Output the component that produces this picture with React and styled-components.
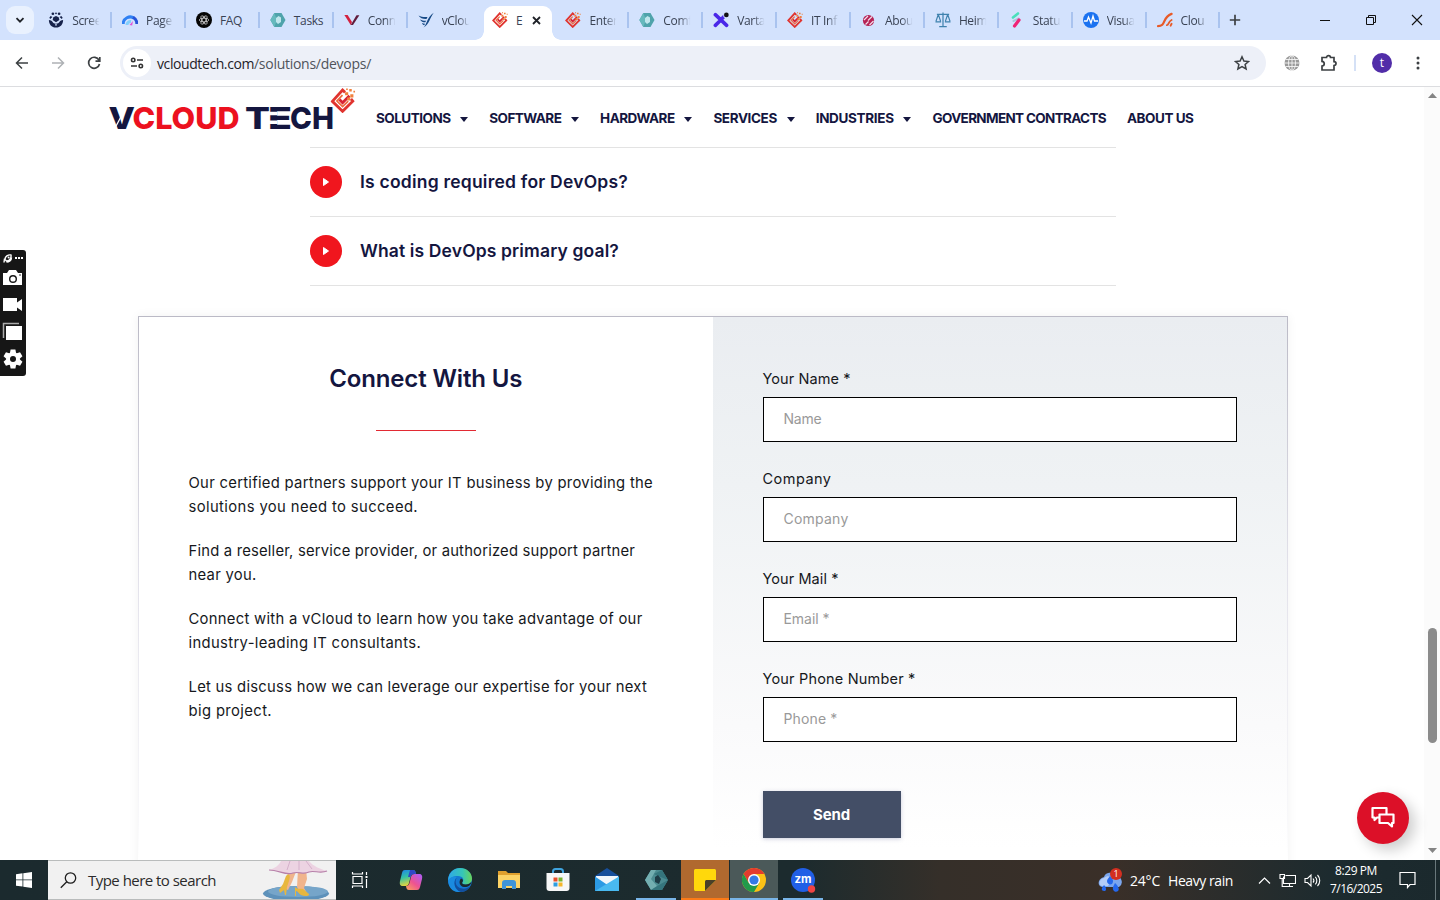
import React, { useLayoutEffect, useRef, useState } from "react";
import styled, { createGlobalStyle, css } from "styled-components";

const GlobalStyle = createGlobalStyle`
  * {
    box-sizing: border-box;
  }
  body {
    margin: 0;
    background: #fff;
    overflow: hidden;
  }
  svg {
    display: block;
    flex: none;
  }
`;

const ui = `"Open Sans", "Noto Sans", sans-serif`;
const brand = `Inter, "Liberation Sans", sans-serif`;
const navy = "#14163f";

const Screen = styled.div`
  width: 1440px;
  height: 900px;
  display: flex;
  flex-direction: column;
  position: relative;
  overflow: hidden;
  font-family: ${brand};
`;

const FitText = styled.span`
  display: inline-block;
  white-space: pre;
`;

// Tracks the text out (or in) until it fills the given width.
const Fit = ({ w, children }) => {
  const ref = useRef(null);
  const [spacing, setSpacing] = useState(0);

  useLayoutEffect(() => {
    const natural = ref.current.getBoundingClientRect().width;
    setSpacing((w - natural) / children.length);
  }, [w, children]);

  return (
    <FitText ref={ref} style={{ letterSpacing: spacing }}>
      {children}
    </FitText>
  );
};

/* ---------- browser ---------- */

const TabStrip = styled.div`
  height: 40px;
  flex: none;
  display: flex;
  background: #d3e2fd;
  font-family: ${ui};
`;

const TabSearch = styled.div`
  width: 28px;
  height: 28px;
  margin: 6px 4.2px 0 6px;
  border-radius: 9px;
  background: #e9f1fe;
  display: flex;
  align-items: center;
  justify-content: center;
`;

const Tab = styled.div`
  width: 73.9px;
  height: 40px;
  flex: none;
  display: flex;
  align-items: center;
  padding-left: 10px;
  gap: 8px;
  font-size: 12px;
  color: #3a4354;

  ${(p) =>
    p.$active &&
    css`
      width: 68px;
      height: 34px;
      margin: 6px 3.5px 0 2.4px;
      padding: 0 0 6px 8px;
      background: #fff;
      border-radius: 9px 9px 0 0;
      position: relative;

      &::before,
      &::after {
        content: "";
        position: absolute;
        bottom: 0;
        width: 9px;
        height: 9px;
        background: radial-gradient(circle at 0 0, transparent 8.5px, #fff 9px);
      }
      &::before {
        left: -9px;
      }
      &::after {
        right: -9px;
        transform: scaleX(-1);
      }
    `}
`;

const TabLabel = styled.span`
  width: ${(p) => (p.$short ? 8 : 30)}px;
  margin-top: 1px;
  white-space: nowrap;
  letter-spacing: -0.35px;
  line-height: 18px;
  mask-image: ${(p) =>
    p.$fade ? "linear-gradient(90deg, #000 55%, transparent 92%)" : "none"};
`;

const Separator = styled.i`
  width: 2px;
  height: 16px;
  margin-left: auto;
  background: #a9c3ef;
  visibility: ${(p) => (p.$hidden ? "hidden" : "visible")};
`;

const NewTab = styled.div`
  width: 30px;
  display: flex;
  align-items: center;
  justify-content: center;
`;

const WindowButtons = styled.div`
  display: flex;
  align-items: center;
  gap: 34px;
  margin-left: auto;
  padding-right: 17px;
`;

const Toolbar = styled.div`
  height: 47px;
  flex: none;
  display: flex;
  align-items: center;
  padding-left: 14px;
  background: #fff;
  border-bottom: 1px solid #dcdde0;
`;

const ToolbarNav = styled.div`
  display: flex;
  gap: 20px;
  width: 106px;
`;

const AddressBar = styled.div`
  width: 1146px;
  height: 34px;
  display: flex;
  align-items: center;
  padding: 0 16px 0 3px;
  border-radius: 17px;
  background: #edf0f8;
  font-family: ${ui};
  font-size: 14px;
  color: #50545b;

  > svg {
    margin-left: auto;
  }
`;

const Domain = styled.span`
  color: #1f2228;
`;

const SiteInfo = styled.div`
  width: 28px;
  height: 28px;
  margin-right: 6px;
  border-radius: 50%;
  background: #fff;
  display: flex;
  align-items: center;
  justify-content: center;
`;

const Extensions = styled.div`
  display: flex;
  align-items: center;
  padding-left: 18px;
`;

const Divider = styled.i`
  width: 2px;
  height: 16px;
  margin: 0 16px;
  background: #d5e1f6;
`;

const Avatar = styled.div`
  width: 20px;
  height: 20px;
  margin-right: 16px;
  border-radius: 50%;
  background: #512da8;
  color: #fff;
  font: 12px/19px ${ui};
  text-align: center;
`;

/* ---------- site ---------- */

const Viewport = styled.div`
  height: 773px;
  flex: none;
  display: flex;
  overflow: hidden;
`;

const Page = styled.div`
  flex: 1;
  display: flex;
  flex-direction: column;
  overflow: hidden;
`;

const Header = styled.header`
  height: 60px;
  flex: none;
  display: flex;
  padding-left: 109px;
`;

const Nav = styled.nav`
  display: flex;
  align-items: center;
  gap: 21px;
  height: 62px;
  margin-left: 19px;
  font-size: 13.5px;
  font-weight: 700;
  color: ${navy};
`;

const NavItem = styled.div`
  display: flex;
  align-items: center;
  gap: 9.8px;
`;

const Caret = styled.i`
  border: 4.5px solid transparent;
  border-top: 5px solid ${navy};
  border-bottom: 0;
  margin-top: 2px;
`;

const Faq = styled.div`
  width: 806px;
  flex: none;
  margin-left: 310px;
  border-top: 1px solid #e3e3e3;
`;

const Question = styled.div`
  height: 69px;
  display: flex;
  align-items: center;
  gap: 18px;
  border-bottom: 1px solid #e3e3e3;
  font-size: 17.5px;
  line-height: 20px;
  font-weight: 600;
  color: ${navy};
`;

const PlayDot = styled.div`
  width: 32px;
  height: 32px;
  border-radius: 50%;
  background: #f0161e;
  display: flex;
  align-items: center;
  justify-content: center;
`;

const Card = styled.section`
  width: 1150px;
  height: 560px;
  flex: none;
  display: flex;
  margin: 30px 0 0 138px;
  padding: 1px 1px 0;
  background: linear-gradient(#bbbac6, #e2e1ea 45%, #f8f8fa 90%, #fff 97%);
  box-shadow: 0 0 10px rgba(0, 0, 0, 0.06);
`;

const Intro = styled.div`
  width: 574px;
  display: flex;
  flex-direction: column;
  padding: 44px 49px 0 49.5px;
  background: #fff;
`;

const Title = styled.h2`
  margin: 0 1px 0 0;
  text-align: center;
  font-size: 24px;
  line-height: 36px;
  font-weight: 600;
  color: ${navy};
`;

const Rule = styled.i`
  width: 100px;
  height: 1px;
  margin: 33px 0 40px 187.5px;
  background: #e22a33;
`;

const Paragraph = styled.p`
  display: flex;
  flex-direction: column;
  align-items: flex-start;
  margin: 0 0 20px;
  font-size: 14.8px;
  line-height: 24px;
  color: #16181c;
`;

const Form = styled.div`
  flex: 1;
  padding: 50px 50px 0;
  background: linear-gradient(#eaedf1, #eff2f4 30%, #fafafb 73%, #fff 95%);
`;

const Field = styled.label`
  display: flex;
  flex-direction: column;
  align-items: flex-start;
  height: 100px;
  font-size: 14.5px;
  line-height: 24px;
  color: #16181c;

  > span {
    margin-left: -0.5px;
  }
`;

const FieldBox = styled.div`
  width: 474px;
  height: 45px;
  margin-top: 6px;
  padding-left: 19.5px;
  border: 1px solid #000;
  background: #fff;
  font-size: 14px;
  line-height: 42px;
  color: #999;
`;

const SendButton = styled.button`
  display: block;
  width: 138px;
  height: 47px;
  margin-top: 24px;
  padding: 0 1px 0 0;
  border: 0;
  background: #434e66;
  box-shadow: 0 1px 4px rgba(50, 60, 120, 0.25);
  color: #fff;
  font: 700 15px ${brand};
`;

const Scrollbar = styled.div`
  width: 16px;
  display: flex;
  flex-direction: column;
  align-items: center;
  justify-content: space-between;
  padding: 6px 0 7px 1px;
  background: #fbfbfb;
`;

const Thumb = styled.i`
  width: 9px;
  height: 115px;
  margin-top: 424px;
  border-radius: 5px;
  background: #8b8b8b;
`;

const ChatBubble = styled.div`
  position: absolute;
  left: 1357px;
  top: 792px;
  width: 52px;
  height: 52px;
  border-radius: 50%;
  background: #dc1028;
  box-shadow: 6px 6px 14px rgba(0, 0, 0, 0.2);
  display: flex;
  align-items: center;
  justify-content: center;
`;

const CaptureBar = styled.div`
  position: absolute;
  left: 0;
  top: 250px;
  width: 26px;
  height: 126px;
  border-radius: 0 3px 3px 0;
  background: #161616;
`;

/* ---------- taskbar ---------- */

const Taskbar = styled.div`
  height: 40px;
  flex: none;
  display: flex;
  align-items: stretch;
  background: linear-gradient(
    90deg,
    #1b2a2e 0,
    #1c2b2e 800px,
    #352f29 940px,
    #3a2f28 1110px,
    #1d2b2f 1330px,
    #1b292d
  );
  color: #fff;
  font-family: ${ui};
  position: relative;
  z-index: 1;
`;

const Start = styled.div`
  width: 48px;
  display: flex;
  align-items: center;
  justify-content: center;
`;

const SearchBox = styled.div`
  width: 288px;
  display: flex;
  align-items: center;
  padding-left: 12px;
  background: #f1f1f1;
  border: solid #b9bcbc;
  border-width: 1px 0;
  color: #2b2b2b;
  font-size: 15px;

  > span {
    margin-left: 11px;
    flex: 1;
  }
`;

const Apps = styled.div`
  display: flex;
  padding-left: 3px;
`;

const AppButton = styled.div`
  width: 48px;
  margin-right: 1px;
  display: flex;
  align-items: center;
  justify-content: center;
  background: ${(p) => p.$fill || "transparent"};
  box-shadow: ${(p) => (p.$line ? `inset 0 -2px ${p.$line}` : "none")};
  ${(p) => p.$narrow && "width: 40px; margin: 0 5px 0 4px;"}
`;

const TaskView = styled.div`
  width: 48px;
  display: flex;
  align-items: center;
  justify-content: center;
`;

const Tray = styled.div`
  display: flex;
  align-items: center;
  margin-left: auto;
  font-size: 14px;
`;

const Weather = styled.div`
  display: flex;
  align-items: center;
  width: 160px;

  > span + span {
    margin-left: 8px;
  }
  > svg {
    margin-right: 7px;
  }
`;

const TrayIcons = styled.div`
  display: flex;
  align-items: center;
  gap: 8px;
  width: 72px;
`;

const Clock = styled.div`
  width: 52px;
  display: flex;
  flex-direction: column;
  align-items: center;
  font-size: 12px;
  line-height: 18px;
`;

const ShowDesktop = styled.i`
  width: 5px;
  align-self: stretch;
  margin-left: 19px;
  border-left: 1px solid #69777b;
`;

/* ---------- drawings ---------- */

const Line = ({ size = 16, box = 16, w = 1.5, color = "#3c4043", children }) => (
  <svg
    width={size}
    height={size}
    viewBox={`0 0 ${box} ${box}`}
    fill="none"
    stroke={color}
    strokeWidth={w}
  >
    {children}
  </svg>
);

const Diamond = ({ size = 16 }) => (
  <svg width={size} height={size} viewBox="0 0 24 24" fill="none">
    <path
      d="M14 4.2 11.6 2 1.8 12.8l9.8 9.6 9.8-9.8-1.8-2.2"
      stroke="#e0342f"
      strokeWidth="2.7"
    />
    <path d="M11.5 6.8 6.2 12.5l5.4 5.3 5.4-5.2" stroke="#ee6a3c" strokeWidth="1.7" />
    <path d="m8.6 11 3 3.2 6.6-6.8" stroke="#d92532" strokeWidth="2.7" />
    <path
      d="M14 4h3v3h-3zM18 1h2.4v2.4H18zM19 6h3v3h-3zM22 2.6h1.6v1.6H22zM15 .4h1.6V2H15zM16 9h3v3h-3z"
      fill="#f0803c"
    />
  </svg>
);

const Hexagon = () => (
  <svg width="16" height="16" viewBox="0 0 16 16">
    <path d="M4.3 1h7.2l4 7-4 7H4.3L.4 8z" fill="#4fa3ab" />
    <path d="M4.3 1 .4 8l3.9 7L7 8z" fill="#66b9bd" />
    <path d="M8.5 4 11 5.5V10l-3 2-2-2V6z" fill="#bfe6ec" />
  </svg>
);

const favicons = {
  soccer: (
    <svg width="16" height="16" viewBox="0 0 18 18">
      <path d="M1 9c2 0 3 1 4 2 1 3 7 3 8 0 1-1 2-2 4-2 0 5-3 8.5-8 8.5S1 14 1 9z" fill="#17234b" />
      <path d="m6 6 3-1.5L12 6l.8 3L9 11.5 5.2 9z" fill="#17234b" />
      <path d="m1.5 6.5 1.5-2 2 1-2.5 2.3zM16.5 6.5l-1.5-2-2 1 2.5 2.3z" fill="#17234b" />
      <path d="M8 14.5h2" stroke="#d3e2fd" strokeWidth="1.5" />
      <circle cx="5.5" cy="2" r="1.5" fill="#17234b" />
      <circle cx="12.5" cy="2" r="1.5" fill="#17234b" />
      <circle cx="9" cy="1.5" r="1" fill="#17234b" />
    </svg>
  ),
  gauge: (
    <svg width="16" height="16" viewBox="0 0 16 16" fill="none">
      <path d="M1.2 12a7 7 0 0 1 11-5.8" stroke="#2f80f3" strokeWidth="3" />
      <path d="M11 5.3a7 7 0 0 1 3.8 6.7" stroke="#2753d8" strokeWidth="3" />
      <path d="M5 13a3.5 3.5 0 0 1 4-3.5" stroke="#83cffc" strokeWidth="3" />
      <path d="M7.5 13 11 9l-.8 4.6z" fill="#e055d8" />
    </svg>
  ),
  gpt: (
    <svg width="16" height="16" viewBox="0 0 16 16" fill="none" stroke="#ccc" strokeWidth=".8">
      <circle cx="8" cy="8" r="8" fill="#050505" stroke="none" />
      <ellipse cx="8" cy="8" rx="4.8" ry="1.9" />
      <ellipse cx="8" cy="8" rx="4.8" ry="1.9" transform="rotate(60 8 8)" />
      <ellipse cx="8" cy="8" rx="4.8" ry="1.9" transform="rotate(120 8 8)" />
    </svg>
  ),
  hex: <Hexagon />,
  vee: (
    <svg width="16" height="16" viewBox="0 0 16 16">
      <path d="M.4 3h3.2L8 10 6.7 13z" fill="#d3203f" />
      <path d="M6.7 13 12.5 3.2h2.9L9 13z" fill="#611c3c" />
    </svg>
  ),
  wing: (
    <svg width="16" height="16" viewBox="0 0 16 16" fill="#174a86">
      <path d="M.5 3.5c3 1.500 5.500 1.800 9 1.500L8.500 7C5 7.200 2 6 .5 3.500zM2 7.500c2 1 4 1.300 6.200 1.200l-1 1.600C5 10.300 3 9.500 2 7.500zM4 11c1 .6 1.800.8 3 .8l-.7 1.500C5 13 4.500 12.500 4 11z" />
      <path d="M5.500 15.500C9 12.500 9 5 15.700.8 12 5.500 11 13 5.500 15.500z" />
    </svg>
  ),
  diamond: <Diamond />,
  cross: (
    <svg width="16" height="16" viewBox="0 0 17 16">
      <path d="m2.5 2.3 12 11.4M2.5 13.7 6.7 9.6M8 8l4-4" stroke="#4a27e8" strokeWidth="3.8" strokeLinecap="round" />
      <circle cx="14.2" cy="2.6" r="3.4" fill="#d3e2fd" />
      <circle cx="14.2" cy="2.6" r="2.5" fill="#111" />
    </svg>
  ),
  ball: (
    <svg width="16" height="16" viewBox="0 0 16 16">
      <circle cx="7.5" cy="8.5" r="5.6" fill="#b52255" />
      <path d="M3 8 7 4M7 8.500l4-4M4.500 12.500l3-3M8.500 13l4-4" stroke="#f3dbe8" strokeWidth="1.2" />
    </svg>
  ),
  scale: (
    <svg width="16" height="16" viewBox="0 0 17 16" fill="none" stroke="#3f82ae" strokeWidth="1.3">
      <path d="M8.5 0v14.5M2 2h13M3.5 2 1 9.5M3.5 2 6 9.5M13.5 2 11 9.5M13.5 2l2.5 7.5M.5 10h6M10.5 10h6M4.5 15h8" />
    </svg>
  ),
  spark: (
    <svg width="16" height="16" viewBox="0 0 16 16" fill="none" strokeLinecap="round">
      <path d="m4 5.5 5-4" stroke="#4ae0bb" strokeWidth="2.6" />
      <path d="M4.5 9 9.5 6.5" stroke="#a9c6dc" strokeWidth="2" />
      <path d="M10 8 5.5 14" stroke="#f02376" strokeWidth="3.2" />
    </svg>
  ),
  pulse: (
    <svg width="16" height="16" viewBox="0 0 16 16">
      <circle cx="8" cy="8" r="8" fill="#1b72f0" />
      <path d="M1 9h3l1.5-4L8 11l2-7 1.5 5H15" stroke="#fff" strokeWidth="1.3" fill="none" />
    </svg>
  ),
  swoosh: (
    <svg width="16" height="16" viewBox="0 0 17 16" fill="none" stroke="#e75a28" strokeLinecap="round">
      <path d="M1 14.5c9 0 4-9 14.5-13" strokeWidth="2.4" />
      <path d="M10.500 13.500c2 0 1.500-4 5-5.500M14.500 14l1-2" strokeWidth="2" />
    </svg>
  ),
};

const tabs = [
  { icon: "soccer", label: "Scree", fade: true },
  { icon: "gauge", label: "Page", fade: true },
  { icon: "gpt", label: "FAQ" },
  { icon: "hex", label: "Tasks" },
  { icon: "vee", label: "Conn", fade: true },
  { icon: "wing", label: "vClou", fade: true },
  { icon: "diamond", label: "E", active: true },
  { icon: "diamond", label: "Enter", fade: true },
  { icon: "hex", label: "Comf", fade: true },
  { icon: "cross", label: "Varta", fade: true },
  { icon: "diamond", label: "IT Inf", fade: true },
  { icon: "ball", label: "Abou", fade: true },
  { icon: "scale", label: "Heim", fade: true },
  { icon: "spark", label: "Statu", fade: true },
  { icon: "pulse", label: "Visua", fade: true },
  { icon: "swoosh", label: "Clou", fade: true },
];

const navItems = [
  { label: "SOLUTIONS", w: 74.5, menu: true },
  { label: "SOFTWARE", w: 72, menu: true },
  { label: "HARDWARE", w: 74.5, menu: true },
  { label: "SERVICES", w: 63.5, menu: true },
  { label: "INDUSTRIES", w: 78, menu: true },
  { label: "GOVERNMENT CONTRACTS", w: 173.5 },
  { label: "ABOUT US", w: 66.5 },
];

const questions = [
  ["Is coding required for DevOps?", 268],
  ["What is DevOps primary goal?", 259],
];

const paragraphs = [
  [
    ["Our certified partners support your IT business by providing the", 464.5],
    ["solutions you need to succeed.", 229.5],
  ],
  [
    ["Find a reseller, service provider, or authorized support partner", 446.5],
    ["near you.", 68],
  ],
  [
    ["Connect with a vCloud to learn how you take advantage of our", 454],
    ["industry-leading IT consultants.", 232.5],
  ],
  [
    ["Let us discuss how we can leverage our expertise for your next", 458.5],
    ["big project.", 83.5],
  ],
];

const fields = [
  { label: "Your Name *", w: 88, hint: "Name", hintW: 38 },
  { label: "Company", w: 69, hint: "Company", hintW: 65 },
  { label: "Your Mail *", w: 76, hint: "Email *", hintW: 46 },
  { label: "Your Phone Number *", w: 153, hint: "Phone *", hintW: 54 },
];

const Logo = () => (
  <svg width="248" height="48" viewBox="109 87 248 48">
    <g fontFamily="Inter, sans-serif" fontWeight="800" fontSize="30.5" fill={navy}>
      <text x="108.5" y="129" textLength="26.5" lengthAdjust="spacingAndGlyphs">
        V
      </text>
      {/* cut across the left arm of the V */}
      <path d="m123.500 112-8.500 16" stroke="#fff" strokeWidth="1.3" />
      <text x="132.5" y="129" textLength="107" lengthAdjust="spacingAndGlyphs" fill="#ec111f">
        CLOUD
      </text>
      <text x="245" y="129" textLength="25" lengthAdjust="spacingAndGlyphs">
        T
      </text>
      <text x="268" y="129" textLength="24" lengthAdjust="spacingAndGlyphs">
        E
      </text>
      {/* the E has no stem */}
      <path d="M268 111.8h9.500v3.400H268zM268 120.400h9.500v3.700H268z" fill="#fff" />
      <text x="290" y="129" textLength="44" lengthAdjust="spacingAndGlyphs">
        CH
      </text>
    </g>
    <g transform="translate(330.5 88)">
      <Diamond size={25} />
    </g>
  </svg>
);

const Dancer = () => (
  <svg width="74" height="38" viewBox="0 0 74 38">
    <ellipse cx="34" cy="32.5" rx="33" ry="7.5" fill="#5d91ba" />
    <ellipse cx="36" cy="30.5" rx="30" ry="5.5" fill="#76a5c9" />
    <path d="M27 8h8l-5 13-4 8-3-1 1-9zM36 8h8l1 10-3 9 3 5-6 1-4-7z" fill="#f0b48c" />
    <path d="M24 15c3-3 5-1 3 5l-2 6-1 8h-1l-1-5-4 3-1-3 4-6zM33 26c3 3 6 1 8 2l6 5c1 2-4 3-8 1-2-1-3-4-5-4v5h-1z" fill="#e8b73e" />
    <path d="M19 0h28c4 5 11 8 18 10-7 3-13-1-18 1-6 3-10-1-16 1-7 3-14-3-24-3C14 7 17 4 19 0z" fill="#ecd3e2" />
    <path d="M7 9c10 0 17 6 24 3 6-2 10 2 16-1 5-2 11 2 18-1" stroke="#b780a9" strokeWidth="1.2" fill="none" />
    <path d="m28 0-3 9M37 0v9M44 0l6 8" stroke="#d5b0cb" fill="none" />
  </svg>
);

const Copilot = () => (
  <svg width="24" height="24" viewBox="0 0 24 24">
    <defs>
      <linearGradient id="cpA" x1="0" y1="0" x2="0.3" y2="1">
        <stop offset="0" stopColor="#1c82f0" />
        <stop offset=".5" stopColor="#35c3a4" />
        <stop offset="1" stopColor="#e8d33b" />
      </linearGradient>
      <linearGradient id="cpB" x1=".8" y1="0" x2="0" y2="1">
        <stop offset="0" stopColor="#b65bee" />
        <stop offset=".5" stopColor="#ee5390" />
        <stop offset="1" stopColor="#fba55b" />
      </linearGradient>
    </defs>
    <path d="M6 2h8c2 0 2.600 1.500 3 4h-2c-2 0-3 1-3.500 3L10 15c-.5 2-1.500 3-3.500 3H4c-3 0-3.600-2-3-5L3 5c.6-2 1-3 3-3z" fill="url(#cpA)" />
    <path d="M18 22h-8c-2 0-2.600-1.500-3-4 2 0 3-1 3.500-3L12 9c.5-2 1.500-3 3.500-3H20c3 0 3.600 2 3 5l-2 8c-.6 2-1 3-3 3z" fill="url(#cpB)" />
    <path d="M11 2h3c2 0 2.600 1.500 3 4h-2c-2 0-3 1-3.500 3H9z" fill="#2f47c8" />
  </svg>
);

const Edge = () => (
  <svg width="24" height="24" viewBox="0 0 24 24">
    <defs>
      <linearGradient id="edgeTop" x1="0" x2="1">
        <stop offset="0" stopColor="#2fa9e8" />
        <stop offset=".6" stopColor="#36c6b7" />
        <stop offset="1" stopColor="#69d45c" />
      </linearGradient>
    </defs>
    <circle cx="12" cy="12" r="12" fill="#1478d2" />
    <path d="M.2 11C1 4.500 6 0 12 0c7 0 12 5 12 10.500 0 4-3 6-6.500 6-3 0-4-1.500-3-2.500 2-2 .5-6-4.500-6C5.500 8 1.500 10 .2 13z" fill="url(#edgeTop)" />
    <path d="M9 9c-4 3-3 11 4 14.900C5 25 0 19 .2 12.500 2 9 6 7.500 9 9z" fill="#1a8be0" />
    <path d="M9 9.500c-3 4-1 10 5 11 3 .5 6-.5 8-2-2 4-6 5.500-9 5.400C6 22 4.500 13 9 9.500z" fill="#124f9e" />
    <path d="M14.500 14c-1 1 0 2.500 3 2.500 2.500 0 5-1.200 6-3-.5 4-4 6-7.500 5.500-4-.5-6-5-3-8.500 2 .5 2.500 2.500 1.500 3.500z" fill="#1b2a2e" />
  </svg>
);

const Explorer = () => (
  <svg width="22" height="20" viewBox="0 0 22 20">
    <path d="M0 1h8l2 2h12v5H0z" fill="#e0a02e" />
    <path d="M0 5h22v13H0z" fill="#fcd366" />
    <path d="M4 19v-6c0-2 1-3 3-3h8c2 0 3 1 3 3v6h-4v-3H8v3z" fill="#3f94d8" />
  </svg>
);

const Store = () => (
  <svg width="24" height="24" viewBox="0 0 24 24">
    <path d="M7 6V3.500C7 2 8 1 9.500 1h5C16 1 17 2 17 3.500V6" stroke="#3fa4df" strokeWidth="2" fill="none" />
    <path d="M.5 5h23v15c0 2-1 3-3 3h-17c-2 0-3-1-3-3z" fill="#f7f7f7" />
    <path d="M7.500 9.500h4v4h-4z" fill="#e8502b" />
    <path d="M12.500 9.500h4v4h-4z" fill="#7bb32e" />
    <path d="M7.500 14.500h4v4h-4z" fill="#2d9de0" />
    <path d="M12.500 14.500h4v4h-4z" fill="#f5b62a" />
  </svg>
);

const Mail = () => (
  <svg width="24" height="24" viewBox="0 0 24 24">
    <path d="M0 8 12 0l12 8v8H0z" fill="#174f9b" />
    <path d="M1 8h22v8H1z" fill="#f1f6fb" />
    <path d="M0 8.500 14 18l10-9.500V23H0z" fill="#2c9ae4" />
    <path d="M0 23 24 8.500V23z" fill="#49b9f0" />
  </svg>
);

const HexApp = () => (
  <svg width="23" height="22" viewBox="0 0 23 22">
    <path d="M6 1h11l6 10-6 10H6L0 11z" fill="#4b8b91" />
    <path d="M6 1 0 11l6-1 5-9zM6 21l-6-10 6-1 6 7z" fill="#73aeb1" />
    <path d="M17 1 9 5l4 2 10 4zM6 21h11l6-10-9 5z" fill="#35757d" />
    <path d="m13 6 3 4-2 5-4-2V8z" fill="#1d3b46" />
  </svg>
);

const StickyNotes = () => (
  <svg width="22" height="22" viewBox="0 0 22 22">
    <path d="M2 0h18c1.500 0 2 .5 2 2v9L11 22H2c-1.500 0-2-.5-2-2V2C0 .5.500 0 2 0z" fill="#ffd80c" />
    <path d="M11 22v-9c0-1.500.5-2 2-2h9z" fill="#4a4029" />
  </svg>
);

const Chrome = () => (
  <svg width="24" height="24" viewBox="0 0 24 24">
    <circle cx="12" cy="12" r="12" fill="#fbc116" />
    <path d="M1.600 6A12 12 0 0 1 22.400 6H12L6.800 15z" fill="#e33b2e" />
    <path d="M1.600 6A12 12 0 0 0 12 24l5.200-9H6.800z" fill="#229a4b" />
    <circle cx="12" cy="12" r="6" fill="#fff" />
    <circle cx="12" cy="12" r="4.6" fill="#3479e6" />
  </svg>
);

const Zoom = () => (
  <svg width="25" height="25" viewBox="0 0 25 25">
    <circle cx="12" cy="12" r="12" fill="#215fe6" />
    <text x="12" y="15" textAnchor="middle" fill="#fff" fontFamily="Inter, sans-serif" fontWeight="700" fontSize="11.5">
      zm
    </text>
    <circle cx="20.5" cy="21" r="3.7" fill="#f04444" />
  </svg>
);

const Rain = () => (
  <svg width="25" height="25" viewBox="0 0 25 25">
    <path d="M6 9a6 6 0 0 1 11-1 6 6 0 0 1 4 11H5C-1 19-1 11 6 9z" fill="#7ba6ee" />
    <path d="M6 10c3-3 7-2 8 1l-4 7H4c-4-1-3-7 2-8z" fill="#b4cdf8" />
    <path d="M12 8c3 3 4 5 2 8-2 1-5 0-5-3 0-2 2-3 3-5zM6 17c2 2 3 5 1 6-2 .5-4-1-3-3zM17 15c3 3 5 6 3 8s-6 0-5-4z" fill="#2568ed" />
    <circle cx="18" cy="6" r="6" fill="#d32f20" />
    <text x="18" y="9.3" textAnchor="middle" fill="#fff" fontFamily="Open Sans, sans-serif" fontSize="9">
      1
    </text>
  </svg>
);

const CaptureTools = () => (
  <svg width="26" height="126" viewBox="0 0 26 126">
    <path d="M5 9.500C5 6.500 8 4.500 11 5c.5 3-1.500 6-4.500 6zM4.500 8.500 4 12.500M11.500 7.500c0 3-2.500 4.500-5 4.500" fill="none" stroke="#fff" strokeWidth="1.4" />
    <g fill="#fff">
      <circle cx="8.6" cy="7.6" r="1" />
      <path d="M15 7h2v2h-2zM18 7h2v2h-2zM21 7h2v2h-2z" />
      <path d="M3 23h4l2-3h7l2 3h4v12H3z" />
      <path d="M3 48h14v4.500L22 49v12l-5-3.500V61H3z" />
      <path d="M6 76h16v14H6z" />
    </g>
    <path d="M3.500 88V73.500H19" stroke="#aaa" strokeWidth="1.5" fill="none" />
    <circle cx="13" cy="29" r="3.3" fill="#fff" stroke="#161616" strokeWidth="1.4" />
    <circle cx="20" cy="25" r=".8" fill="#161616" />
    <g transform="translate(13 109)" fill="#fff">
      <circle r="6.8" />
      {[0, 60, 120, 180, 240, 300].map((a) => (
        <path key={a} d="M-2.400-9.500h4.800l1 5h-6.800z" transform={`rotate(${a})`} />
      ))}
      <circle r="3" fill="#161616" />
    </g>
  </svg>
);

const App = () => {
  return (
    <Screen>
      <GlobalStyle />
      <TabStrip>
        <TabSearch>
          <Line size={10} box={10} w={1.8} color="#1f2228">
            <path d="m1.500 3.200 3.500 3.500 3.500-3.500" />
          </Line>
        </TabSearch>
        {tabs.map((tab, i) => (
          <Tab key={i} $active={tab.active}>
            {favicons[tab.icon]}
            <TabLabel $fade={tab.fade} $short={tab.active}>
              {tab.label}
            </TabLabel>
            {tab.active ? (
              <Line size={9} box={9} w={1.8} color="#1f2228">
                <path d="m1 1 7 7M8 1 1 8" />
              </Line>
            ) : (
              <Separator $hidden={i === 5} />
            )}
          </Tab>
        ))}
        <NewTab>
          <Line size={12} box={12} w={1.7}>
            <path d="M6 .8v10.400M.8 6h10.400" />
          </Line>
        </NewTab>
        <WindowButtons>
          <Line size={12} box={12} w={1} color="#111">
            <path d="M1 6.500h10" />
          </Line>
          <Line size={12} box={12} w={1} color="#111">
            <path d="M1.500 3.500h7v7h-7zM3.500 3V1.500h7v7H9" />
          </Line>
          <Line size={12} box={12} w={1.1} color="#111">
            <path d="m1 1 10 10M11 1 1 11" />
          </Line>
        </WindowButtons>
      </TabStrip>

      <Toolbar>
        <ToolbarNav>
          <Line>
            <path d="M14 8H3M8 2.500 2.500 8 8 13.500" />
          </Line>
          <Line color="#aeb1b5">
            <path d="M2 8h11M8 2.500 13.500 8 8 13.500" />
          </Line>
          <Line w={1.7}>
            <path d="M13 5.200A5.500 5.500 0 1 0 13.500 9M13.800 2v4.200H9.500" />
          </Line>
        </ToolbarNav>
        <AddressBar>
          <SiteInfo>
            <Line size={14} box={14} w={1.6} color="#333">
              <circle cx="3.2" cy="4" r="1.7" />
              <circle cx="10.8" cy="10" r="1.7" />
              <path d="M7 4h6M1 10h6" />
            </Line>
          </SiteInfo>
          <Domain>
            <Fit w={97}>vcloudtech.com</Fit>
          </Domain>
          <Fit w={117}>/solutions/devops/</Fit>
          <Line size={16}>
            <path d="m8 1.800 1.900 4.200 4.600.5-3.400 3 1 4.500L8 11.700 3.900 14l1-4.500-3.400-3L6.100 6z" />
          </Line>
        </AddressBar>
        <Extensions>
          <Line w={0.9} color="#f4f4f4">
            <circle cx="8" cy="8" r="7.5" fill="#999" stroke="none" />
            <ellipse cx="8" cy="8" rx="3.5" ry="7.5" />
            <path d="M8 0v16M0 8h16M1.500 4.500h13M1.500 11.500h13" />
          </Line>
          <svg width="38" height="18" viewBox="-20 0 38 18">
            <path
              d="M2 3.500h4.500c0-2.500 4-2.500 4 0H14v4.200c2.700.2 2.700 3.600 0 3.800V16H2v-4c3-.4 3-4.200 0-4.600z"
              fill="none"
              stroke="#3c4043"
              strokeWidth="1.7"
            />
          </svg>
          <Divider />
          <Avatar>t</Avatar>
          <svg width="12" height="14" viewBox="-8 0 12 14" fill="#3c4043">
            <circle cx="2" cy="2" r="1.5" />
            <circle cx="2" cy="7" r="1.5" />
            <circle cx="2" cy="12" r="1.5" />
          </svg>
        </Extensions>
      </Toolbar>

      <Viewport>
        <Page>
          <Header>
            <Logo />
            <Nav>
              {navItems.map((item) => (
                <NavItem key={item.label}>
                  <Fit w={item.w}>{item.label}</Fit>
                  {item.menu && <Caret />}
                </NavItem>
              ))}
            </Nav>
          </Header>
          <Faq>
            {questions.map(([text, w]) => (
              <Question key={text}>
                <PlayDot>
                  <svg width="8" height="10" viewBox="0 0 8 10">
                    <path d="m1.500 1.500 5 3.500-5 3.500z" fill="#fff" stroke="#fff" strokeLinejoin="round" />
                  </svg>
                </PlayDot>
                <Fit w={w}>{text}</Fit>
              </Question>
            ))}
          </Faq>
          <Card>
            <Intro>
              <Title>
                <Fit w={193}>Connect With Us</Fit>
              </Title>
              <Rule />
              {paragraphs.map((lines) => (
                <Paragraph key={lines[0][0]}>
                  {lines.map(([text, w]) => (
                    <Fit key={text} w={w}>
                      {text}
                    </Fit>
                  ))}
                </Paragraph>
              ))}
            </Intro>
            <Form>
              {fields.map((field) => (
                <Field key={field.label}>
                  <Fit w={field.w}>{field.label}</Fit>
                  <FieldBox>
                    <Fit w={field.hintW}>{field.hint}</Fit>
                  </FieldBox>
                </Field>
              ))}
              <SendButton>
                <Fit w={37}>Send</Fit>
              </SendButton>
            </Form>
          </Card>
        </Page>
        <Scrollbar>
          <svg width="9" height="5" viewBox="0 0 9 5">
            <path d="M0 5 4.500 0 9 5z" fill="#848484" />
          </svg>
          <Thumb />
          <svg width="9" height="5" viewBox="0 0 9 5">
            <path d="m0 0 4.500 5L9 0z" fill="#848484" />
          </svg>
        </Scrollbar>
      </Viewport>

      <Taskbar>
        <Start>
          <svg width="16" height="16" viewBox="0 0 16 16" fill="#fff">
            <path d="M0 2.200 6.500 1.300v6.200H0zM7.300 1.200 16 0v7.500H7.300zM0 8.300h6.500v6.300L0 13.700zM7.300 8.300H16V16l-8.700-1.200z" />
          </svg>
        </Start>
        <SearchBox>
          <Line size={17} box={17} w={1.3} color="#1f1f1f">
            <circle cx="10.5" cy="6" r="5.2" />
            <path d="m6.800 9.800-6 6" />
          </Line>
          <span>
            <Fit w={128}>Type here to search</Fit>
          </span>
          <Dancer />
        </SearchBox>
        <TaskView>
          <Line size={18} box={18} w={1.2} color="#fff">
            <path d="M2 5.500h9v7H2zM1.500 1v2h10V1M1.500 17v-2h10v2M15.500 1v3M15.500 8v9" />
            <path d="M14.500 5h2v2h-2z" fill="#fff" stroke="none" />
          </Line>
        </TaskView>
        <Apps>
          <AppButton>
            <Copilot />
          </AppButton>
          <AppButton>
            <Edge />
          </AppButton>
          <AppButton>
            <Explorer />
          </AppButton>
          <AppButton>
            <Store />
          </AppButton>
          <AppButton>
            <Mail />
          </AppButton>
          <AppButton $narrow $line="#79b5e8">
            <HexApp />
          </AppButton>
          <AppButton $fill="#b0692f" $line="#fb7a17">
            <StickyNotes />
          </AppButton>
          <AppButton $fill="#4b5959" $line="#79b5e8">
            <Chrome />
          </AppButton>
          <AppButton $narrow $line="#79b5e8">
            <Zoom />
          </AppButton>
        </Apps>
        <Tray>
          <Weather>
            <Rain />
            <Fit w={30}>24°C</Fit>
            <Fit w={65}>Heavy rain</Fit>
          </Weather>
          <TrayIcons>
            <Line size={13} box={13} w={1.2} color="#fff">
              <path d="M1 9.500 6.500 4 12 9.500" />
            </Line>
            <Line size={17} box={17} w={1.1} color="#fff">
              <path d="M4.500 4.500V11.500h12v-8h-10M10.500 11.500v3M7 14.500h7M1 2.500h4.500v4H1zM3.200 6.500v8H7" />
            </Line>
            <Line size={17} box={17} w={1.1} color="#fff">
              <path d="M1 6.500h2.500L7 3v11l-3.500-3.500H1zM9 6.500c1 1.200 1 3 0 4M11.300 4.800c2 2.200 2 5.500 0 7.500M13.500 3c3 3.200 3 8 0 11" />
            </Line>
          </TrayIcons>
          <Clock>
            <Fit w={42}>8:29 PM</Fit>
            <Fit w={52}>7/16/2025</Fit>
          </Clock>
          <svg width="34" height="18" viewBox="-17 0 34 18">
            <path d="M1 1.500h15v12h-5L8.500 16.500V13.500H1z" fill="none" stroke="#fff" strokeWidth="1.2" />
          </svg>
          <ShowDesktop />
        </Tray>
      </Taskbar>

      <CaptureBar>
        <CaptureTools />
      </CaptureBar>
      <ChatBubble>
        <Line size={26} box={26} w={2.2} color="#fff">
          <path d="M9 12.500H7l-2.500 2.500v-2.500H2.500V3h14v5.500M9.500 9.500h14V18H22v3.500L18 18H9.500z" strokeLinejoin="round" />
        </Line>
      </ChatBubble>
    </Screen>
  );
};

export default App;
